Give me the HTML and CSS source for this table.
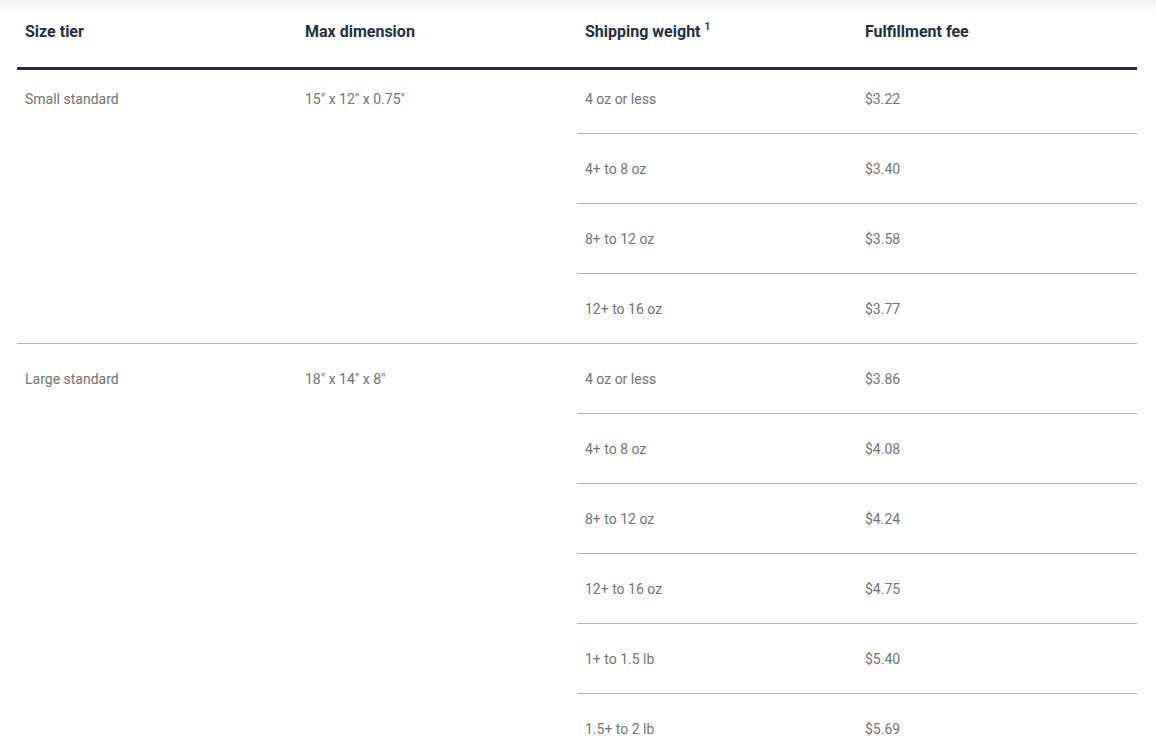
FILE: index.html
```html
<!DOCTYPE html>
<html lang="en">
<head>
<meta charset="utf-8">
<title>Fulfillment fees</title>
<link rel="stylesheet" href="styles.css">
</head>
<body>
<div class="wrap">
<table class="fees">
  <colgroup>
    <col class="col"><col class="col"><col class="col"><col class="col">
  </colgroup>
  <thead>
    <tr>
      <th>Size tier</th>
      <th>Max dimension</th>
      <th>Shipping weight <sup>1</sup></th>
      <th>Fulfillment fee</th>
    </tr>
  </thead>
  <tbody>
    <tr class="first">
      <td class="span" rowspan="4">Small standard</td>
      <td class="span" rowspan="4">15" x 12" x 0.75"</td>
      <td>4 oz or less</td><td>$3.22</td>
    </tr>
    <tr><td>4+ to 8 oz</td><td>$3.40</td></tr>
    <tr><td>8+ to 12 oz</td><td>$3.58</td></tr>
    <tr class="last"><td>12+ to 16 oz</td><td>$3.77</td></tr>
    <tr>
      <td class="span" rowspan="6">Large standard</td>
      <td class="span" rowspan="6">18″ x 14″ x 8″</td>
      <td>4 oz or less</td><td>$3.86</td>
    </tr>
    <tr><td>4+ to 8 oz</td><td>$4.08</td></tr>
    <tr><td>8+ to 12 oz</td><td>$4.24</td></tr>
    <tr><td>12+ to 16 oz</td><td>$4.75</td></tr>
    <tr><td>1+ to 1.5 lb</td><td>$5.40</td></tr>
    <tr class="last"><td>1.5+ to 2 lb</td><td>$5.69</td></tr>
  </tbody>
</table>
</div>
</body>
</html>
```
FILE: styles.css
```css
html, body {
  margin: 0;
  padding: 0;
  background: #fff;
}
body {
  background: linear-gradient(#f2f2f2, #ffffff 18px) no-repeat;
  font-family: Roboto, "Liberation Sans", sans-serif;
}
.wrap {
  padding: 0 19px 0 17px;
}
.fees {
  width: 1120px;
  border-collapse: collapse;
  table-layout: fixed;
}
.fees .col {
  width: 280px;
}
.fees th {
  text-align: left;
  font-size: 16px;
  font-weight: 700;
  color: #232f3e;
  line-height: 20px;
  padding: 22px 8px 25px;
  border-bottom: 3px solid #232f3e;
  white-space: nowrap;
}
.fees th sup {
  font-size: 10px;
  line-height: 0;
  vertical-align: 7px;
}
.fees td {
  font-size: 14px;
  color: #6f7373;
  line-height: 20px;
  padding: 25px 8px 24px;
  border-bottom: 1px solid #aab4b4;
  vertical-align: top;
}
.fees tr.first td {
  padding-top: 19px;
}
```
